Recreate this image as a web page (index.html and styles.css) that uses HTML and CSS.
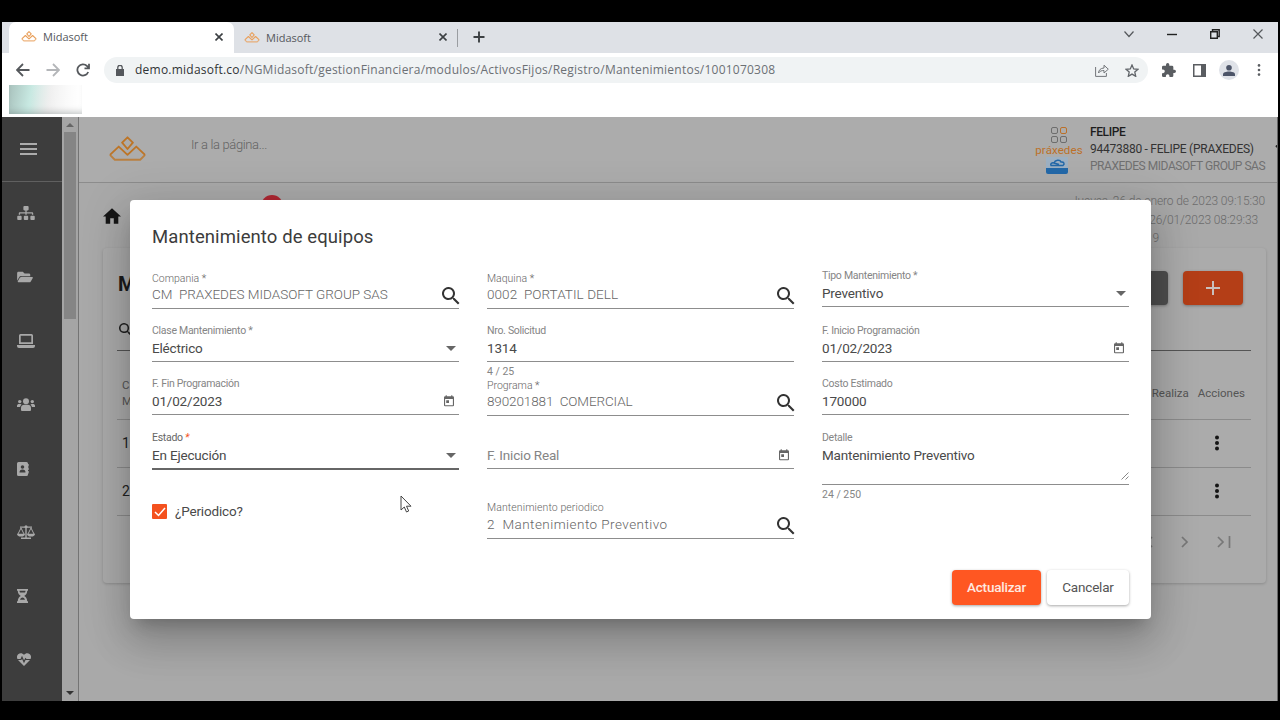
FILE: index.html
```
<!DOCTYPE html>
<html lang="es">
<head>
    <meta charset="utf-8">
    <title>Midasoft</title>
    <link rel="stylesheet" href="styles.css">
</head>
<body>
    <svg class="defs">
        <symbol id="logo" viewBox="0 0 40 26">
            <path d="M20 1l5.500 5.500L20 13l-5.500-6.500zM2 19l9-8.500 9 8.500 9-8.500L38 19" />
            <path class="logo-base" d="M2 19l5 5h26l5-5" />
        </symbol>
        <symbol id="search" viewBox="0 0 18 18">
            <path d="M12.500 11h-.79l-.28-.27A6.500 6.500 0 1 0 10.730 11.430l.27.28v.79l5 4.990L17.490 16zm-6 0a4.500 4.500 0 1 1 0-9 4.500 4.500 0 0 1 0 9z" />
        </symbol>
        <symbol id="calendar" viewBox="3 1 18 21">
            <path d="M19 3h-1V1h-2v2H8V1H6v2H5a2 2 0 0 0-2 2v14a2 2 0 0 0 2 2h14a2 2 0 0 0 2-2V5a2 2 0 0 0-2-2zm0 16H5V8h14zM7 10h5v5H7z" />
        </symbol>
    </svg>

    <div class="window">
        <div class="tabs">
            <div class="tab active">
                <svg class="favicon logo"><use href="#logo" /></svg>
                <span>Midasoft</span>
                <svg class="close" viewBox="0 0 8 8"><path d="M.5.5l7 7M7.500.5l-7 7" /></svg>
            </div>
            <div class="tab">
                <svg class="favicon logo"><use href="#logo" /></svg>
                <span>Midasoft</span>
                <svg class="close" viewBox="0 0 8 8"><path d="M.5.5l7 7M7.500.5l-7 7" /></svg>
            </div>
            <svg class="new-tab" viewBox="0 0 12 12"><path d="M6 .5v11M.5 6h11" /></svg>
            <div class="controls">
                <svg width="10" height="10" viewBox="0 0 10 10"><path d="M.5 2.500l4.500 5 4.500-5" /></svg>
                <svg width="10" height="10" viewBox="0 0 10 10"><path class="dark" d="M0 5.500h10" /></svg>
                <svg width="10" height="10" viewBox="0 0 10 10"><path class="dark" d="M.7 2.700h6.600v6.600H.7zM2.500 2.500V.8h6.700v6.700H7.500" /></svg>
                <svg width="10" height="10" viewBox="0 0 10 10"><path d="M.5.5l9 9M9.500.5l-9 9" /></svg>
            </div>
        </div>

        <div class="toolbar">
            <div class="nav">
                <svg viewBox="0 0 14 14"><path d="M13.500 7H1.500M7 1L1 7l6 6" /></svg>
                <svg class="disabled" viewBox="0 0 14 14"><path d="M.5 7h12M7 1l6 6-6 6" /></svg>
                <svg viewBox="0 0 14 14"><path d="M12.200 9A5.600 5.600 0 1 1 11 3L12.800 5M13 .8V5.300H8.500" /></svg>
            </div>
            <div class="address">
                <svg class="lock" viewBox="0 0 8 11"><path d="M0 4h8v7H0z" /><path class="shackle" d="M1.800 4V2.500a2.200 2.200 0 0 1 4.400 0V4" /></svg>
                <span class="url"><b>demo.midasoft.co</b>/NGMidasoft/gestionFinanciera/modulos/ActivosFijos/Registro/Mantenimientos/1001070308</span>
                <svg class="share" viewBox="0 0 14 13"><path d="M.6 3v9.400h10.800V9M3.500 9c.3-3 2-4.800 5.500-5V1.200l4.300 4L9 9V6.500C6.500 6.500 5 7 3.500 9z" /></svg>
                <svg class="star" viewBox="0 0 14 13"><path d="M7 1l1.700 3.900 4.300.4-3.200 2.800.9 4.200L7 10.100l-3.700 2.200.9-4.200L1 5.300l4.300-.4z" /></svg>
            </div>
            <div class="extensions">
                <svg class="puzzle" viewBox="2 1 21 21"><path d="M20.500 11H19V7a2 2 0 0 0-2-2h-4V3.500a2.500 2.500 0 0 0-5 0V5H4a2 2 0 0 0-2 2v3.800h1.500a2.700 2.700 0 0 1 0 5.400H2V20a2 2 0 0 0 2 2h3.800v-1.500a2.700 2.700 0 0 1 5.400 0V22H17a2 2 0 0 0 2-2v-4h1.500a2.500 2.500 0 0 0 0-5z" /></svg>
                <svg class="panel" viewBox="0 0 13 13"><path d="M0 0h13v13H0zM1.500 1.500v10H8v-10z" fill-rule="evenodd" /></svg>
                <div class="avatar"><svg viewBox="0 0 12 11"><circle cx="6" cy="2.800" r="2.800" /><path d="M0 11V9.500C0 7.500 3 6.600 6 6.600s6 .9 6 2.900V11z" /></svg></div>
                <svg class="more" viewBox="0 0 4 12"><circle cx="2" cy="1.400" r="1.300" /><circle cx="2" cy="6" r="1.300" /><circle cx="2" cy="10.600" r="1.300" /></svg>
            </div>
        </div>
        <div class="bookmarks"><div class="bookmark-blur"></div></div>

        <div class="app">
            <div class="sidebar">
                <div class="menu"><i></i><i></i><i></i></div>
                <div class="item"><svg width="18" height="14" viewBox="0 0 640 512"><path d="M128 352H32c-17.670 0-32 14.330-32 32v96c0 17.670 14.330 32 32 32h96c17.670 0 32-14.330 32-32v-96c0-17.670-14.330-32-32-32zm-24-80h192v48h48v-48h192v48h48v-57.590c0-21.170-17.230-38.410-38.410-38.410H344v-64h40c17.670 0 32-14.330 32-32V32c0-17.670-14.330-32-32-32H256c-17.670 0-32 14.330-32 32v96c0 17.670 14.330 32 32 32h40v64H94.410C73.230 224 56 241.230 56 262.410V320h48v-48zm264 80h-96c-17.670 0-32 14.330-32 32v96c0 17.670 14.330 32 32 32h96c17.670 0 32-14.330 32-32v-96c0-17.670-14.330-32-32-32zm240 0h-96c-17.670 0-32 14.330-32 32v96c0 17.670 14.330 32 32 32h96c17.670 0 32-14.330 32-32v-96c0-17.670-14.330-32-32-32z" /></svg></div>
                <div class="item"><svg width="16" height="14" viewBox="0 0 576 512"><path d="M572.700 292L500.300 416a64 64 0 0 1-55.300 32H45c-18.500 0-30-20-20.700-36l72.400-124.200A64 64 0 0 1 152 256h400c18.500 0 30 20 20.700 36zM152 224h328v-48c0-26.500-21.500-48-48-48H272l-64-64H48C21.500 64 0 85.500 0 112v278l69-118.400A96 96 0 0 1 152 224z" /></svg></div>
                <div class="item"><svg width="18" height="14" viewBox="0 0 18 14"><path d="M3.500 0h11A1.500 1.500 0 0 1 16 1.500V10H2V1.500A1.500 1.500 0 0 1 3.500 0zm.2 1.700v6.600h10.600V1.700zM0 11h18v1a2 2 0 0 1-2 2H2a2 2 0 0 1-2-2z" fill-rule="evenodd" /></svg></div>
                <div class="item"><svg width="18" height="13" viewBox="0 0 18 13"><circle cx="9" cy="3.200" r="3" /><circle cx="2.700" cy="3.600" r="1.700" /><circle cx="15.300" cy="3.600" r="1.700" /><path d="M4 12V10c0-2 1.500-3.200 3.300-3.200h3.400C12.500 6.800 14 8 14 10v2a1 1 0 0 1-1 1H5a1 1 0 0 1-1-1zM0 9V7.700C0 6.600 1 6 2 6h1.500l1 .5A5 5 0 0 0 3 9zM18 9V7.700c0-1.100-1-1.700-2-1.700h-1.500l-1 .5A5 5 0 0 1 15 9z" /></svg></div>
                <div class="item"><svg width="12" height="14" viewBox="0 0 12 14"><path d="M1.500 0h8A1.500 1.500 0 0 1 11 1.500v11A1.500 1.500 0 0 1 9.500 14h-8A1.500 1.500 0 0 1 0 12.500v-11A1.500 1.500 0 0 1 1.500 0zM5.500 3.200a1.800 1.800 0 1 0 0 3.600 1.800 1.800 0 0 0 0-3.600zM2.500 10.500h6c0-1.800-1-3-3-3s-3 1.200-3 3zM11.300 2h.7v2.500h-.7zM11.300 5.500h.7V8h-.7zM11.300 9h.7v2.500h-.7z" fill-rule="evenodd" /></svg></div>
                <div class="item"><svg width="18" height="14" viewBox="0 0 18 14"><path d="M8.300 1h1.400v11.500H14V14H4v-1.500h4.300zM3 1.500h12v1.300H3z" /><circle cx="9" cy="1.700" r="1.500" /><path class="line" d="M1 9l3-6 3 6M11 9l3-6 3 6" /><path d="M0 8.800h8a4 2.800 0 0 1-8 0zM10 8.800h8a4 2.800 0 0 1-8 0z" /></svg></div>
                <div class="item"><svg width="11" height="14" viewBox="0 0 11 14"><path d="M0 0h11v1.800h-.8C10.200 4.500 9 6 7.200 7c1.800 1 3 2.500 3 5.200h.8V14H0v-1.800h.8c0-2.700 1.200-4.200 3-5.200C2 6 .8 4.500.8 1.800H0zM3 3.500h5c.3-.5.500-1 .5-1.700h-6c0 .7.200 1.200.5 1.700zM3 10.800h5C7.400 9.200 6.500 8.500 5.500 8.500S3.600 9.200 3 10.800z" fill-rule="evenodd" /></svg></div>
                <div class="item"><svg width="14" height="13" viewBox="0 0 14 13"><path d="M7 13L1 7C-.5 5-.3 2.500 1.200 1.200 3-.4 5.500 0 7 1.800 8.500 0 11-.4 12.800 1.200c1.500 1.300 1.700 3.800.2 5.800z" /><path class="pulse" d="M0 6.500h4L5 4.200l2 4.600 1.500-3 .6.700H14" /></svg></div>
            </div>
            <div class="scrollbar">
                <i class="up"></i>
                <div class="thumb"></div>
                <i class="down"></i>
            </div>

            <div class="main">
                <div class="header">
                    <svg class="brand logo"><use href="#logo" /></svg>
                    <span class="goto">Ir a la página...</span>
                    <div class="company">
                        <div class="squares"><i></i><i class="o"></i><i></i><i></i></div>
                        <span>práxedes</span>
                        <svg viewBox="0 0 22 17"><path class="card-top" d="M0 0h22v15H0z" /><path class="card-bottom" d="M0 11h22v4a2 2 0 0 1-2 2H2a2 2 0 0 1-2-2z" /><path class="cloud" d="M5 8.500c-1-2 1-3 3-2.500 1-3 6-4 7-1 3-.5 4 2 2 3.500zM8 6l5 1.500" /></svg>
                    </div>
                    <div class="user">
                        <div class="user-name">FELIPE</div>
                        <div class="user-id">94473880 - FELIPE (PRAXEDES)</div>
                        <div class="user-company">PRAXEDES MIDASOFT GROUP SAS</div>
                    </div>
                    <svg class="user-arrow" viewBox="0 0 8 5"><path d="M1 .5l3.500 3.500L8 .5" /></svg>
                </div>

                <div class="crumbs">
                    <svg class="home" viewBox="2 3 20 17"><path d="M10 20v-6h4v6h5v-8h3L12 3 2 12h3v8z" /></svg>
                    <div class="notice"></div>
                    <div class="dates">
                        <div>Jueves, 26 de enero de 2023 09:15:30</div>
                        <div class="access">26/01/2023 08:29:33</div>
                        <div class="version">9</div>
                    </div>
                </div>

                <div class="card">
                    <div class="card-head">
                        <h2>M</h2>
                        <div class="btn-gray"></div>
                        <div class="btn-add"><svg viewBox="0 0 14 14"><path d="M7 0v14M0 7h14" /></svg></div>
                    </div>
                    <div class="filter"><svg><use href="#search" /></svg></div>
                    <div class="row head"><div>C<br>M</div><div class="right"><span>Realiza</span><span>Acciones</span></div></div>
                    <div class="row"><div>1</div><svg class="dots" viewBox="0 0 4 16"><circle cx="2" cy="2.500" r="2" /><circle cx="2" cy="8" r="2" /><circle cx="2" cy="13.500" r="2" /></svg></div>
                    <div class="row"><div>2</div><svg class="dots" viewBox="0 0 4 16"><circle cx="2" cy="2.500" r="2" /><circle cx="2" cy="8" r="2" /><circle cx="2" cy="13.500" r="2" /></svg></div>
                    <div class="pager">
                        <svg width="8" height="12" viewBox="0 0 8 12"><path d="M7 1L2 6l5 5" /></svg>
                        <svg width="8" height="12" viewBox="0 0 8 12"><path d="M1 1l5 5-5 5" /></svg>
                        <svg width="14" height="12" viewBox="0 0 14 12"><path d="M1 1l5 5-5 5M12.500 0v12" /></svg>
                    </div>
                </div>
            </div>
        </div>
    </div>

    <div class="dialog">
        <h1>Mantenimiento de equipos</h1>
        <div class="form">
            <div class="field lookup">
                <label>Compania *</label>
                <div class="value"><span class="company-name">CM&nbsp; PRAXEDES MIDASOFT GROUP SAS</span><svg class="search"><use href="#search" /></svg></div>
            </div>
            <div class="field lookup">
                <label>Maquina *</label>
                <div class="value"><span>0002&nbsp; PORTATIL DELL</span><svg class="search"><use href="#search" /></svg></div>
            </div>
            <div class="field">
                <label>Tipo Mantenimiento *</label>
                <div class="value">Preventivo<i class="caret"></i></div>
            </div>

            <div class="field">
                <label>Clase Mantenimiento *</label>
                <div class="value">Eléctrico<i class="caret"></i></div>
            </div>
            <div class="field">
                <label>Nro. Solicitud</label>
                <div class="value">1314</div>
                <div class="hint">4 / 25</div>
            </div>
            <div class="field">
                <label>F. Inicio Programación</label>
                <div class="value">01/02/2023<svg class="calendar"><use href="#calendar" /></svg></div>
            </div>

            <div class="field">
                <label>F. Fin Programación</label>
                <div class="value">01/02/2023<svg class="calendar"><use href="#calendar" /></svg></div>
            </div>
            <div class="field lookup program">
                <label>Programa *</label>
                <div class="value"><span>890201881&nbsp; COMERCIAL</span><svg class="search"><use href="#search" /></svg></div>
            </div>
            <div class="field">
                <label>Costo Estimado</label>
                <div class="value">170000</div>
            </div>

            <div class="field focused">
                <label>Estado <em>*</em></label>
                <div class="value">En Ejecución<i class="caret"></i></div>
            </div>
            <div class="field">
                <label></label>
                <div class="value placeholder">F. Inicio Real<svg class="calendar"><use href="#calendar" /></svg></div>
            </div>
            <div class="field area">
                <label>Detalle</label>
                <div class="value">Mantenimiento Preventivo<svg class="resize" viewBox="0 0 8 8"><path d="M.5 7.500l7-7M4.500 7.500l3-3" /></svg></div>
                <div class="hint">24 / 250</div>
            </div>

            <div class="check">
                <div class="box"><svg viewBox="0 0 12 10"><path d="M1 5l3.500 3.500L11 1" /></svg></div>
                <span>¿Periodico?</span>
            </div>
            <div class="field lookup periodic">
                <label>Mantenimiento periodico</label>
                <div class="value"><span>2&nbsp; Mantenimiento Preventivo</span><svg class="search"><use href="#search" /></svg></div>
            </div>
        </div>
        <div class="actions">
            <button class="primary">Actualizar</button>
            <button>Cancelar</button>
        </div>
    </div>

    <svg class="cursor" viewBox="0 0 12 18"><path d="M1 1v14l3.300-3 2.200 5 2.200-1-2.200-4.800H11z" /></svg>
</body>
</html>
```
FILE: styles.css
```
* {
    box-sizing: border-box;
}

body {
    margin: 0;
    height: 720px;
    overflow: hidden;
    background: #000;
    font-family: Roboto, sans-serif;
    padding: 22px 2px 19px;
}

svg {
    display: block;
    flex: none;
}

.defs {
    position: absolute;
    width: 0;
    height: 0;
}

.window {
    width: 1276px;
    height: 679px;
    background: #fff;
    overflow: hidden;
}

.logo {
    fill: none;
    stroke: #e9a05c;
    stroke-width: 2.8;
    stroke-linejoin: round;
}

/* Browser */
.tabs {
    display: flex;
    align-items: center;
    height: 31px;
    background: #dee1e6;
    font-family: "Open Sans", sans-serif;
    font-size: 11px;
    color: #55585c;
}

.tab {
    display: flex;
    align-items: center;
    width: 224px;
    height: 31px;
    padding: 0 11px 2px 12px;
}

.tab.active {
    background: #fff;
    width: 225px;
    margin-left: 7px;
    border-radius: 7px 7px 0 0;
}

.tab:nth-child(2) {
    border-right: 1px solid #9a9da1;
    height: 18px;
    padding: 0 10px 1px 10px;
    margin-right: 15px;
    width: 224px;
}

.favicon {
    width: 16px;
    height: 11px;
    margin-right: 6px;
}

.tab .close {
    width: 8px;
    height: 8px;
    margin-left: auto;
    stroke: #3c4043;
    stroke-width: 1.6;
}

.new-tab {
    width: 12px;
    height: 12px;
    margin-top: -1px;
    stroke: #3c4043;
    stroke-width: 1.9;
}

.controls {
    display: flex;
    gap: 33px;
    margin: -7px 15px 0 auto;
    fill: none;
    stroke: #55585c;
    stroke-width: 1.2;
}

.controls .dark {
    stroke: #222;
    stroke-width: 1.4;
}

.toolbar {
    display: flex;
    align-items: center;
    height: 30px;
    margin-top: 2px;
}

.nav {
    display: flex;
    gap: 16px;
    width: 102px;
    padding-left: 14px;
    fill: none;
    stroke: #55585c;
    stroke-width: 1.8;
}

.nav svg {
    width: 14px;
    height: 14px;
}

.nav .disabled {
    stroke: #b4b6b9;
}

.address {
    display: flex;
    align-items: center;
    width: 1044px;
    height: 26px;
    border-radius: 13px;
    background: #f0f3f4;
    padding: 0 9px 0 12px;
}

.lock {
    width: 8px;
    height: 11px;
    fill: #55585c;
    margin-right: 11px;
}

.shackle {
    fill: none;
    stroke: #55585c;
    stroke-width: 1.3;
}

.url {
    font-family: "Open Sans", sans-serif;
    font-size: 12px;
    color: #6c7074;
    letter-spacing: 0.230px;
    padding-bottom: 1px;
}

.url b {
    font-weight: 400;
    color: #303336;
}

.share {
    width: 14px;
    height: 13px;
    margin-left: auto;
    margin-right: 16px;
    fill: none;
    stroke: #73767a;
}

.star {
    width: 14px;
    height: 13px;
    fill: none;
    stroke: #5f6368;
    stroke-width: 1.3;
}

.extensions {
    display: flex;
    align-items: center;
    margin-left: 14px;
    fill: #5a5d61;
}

.puzzle {
    width: 14px;
    height: 14px;
}

.panel {
    width: 13px;
    height: 13px;
    margin: 0 13px 0 17px;
}

.avatar {
    display: flex;
    align-items: center;
    justify-content: center;
    width: 20px;
    height: 20px;
    border-radius: 50%;
    background: #dfe2e8;
    fill: #4c5468;
}

.avatar svg {
    width: 12px;
    height: 11px;
}

.more {
    width: 4px;
    height: 12px;
    margin-left: 18px;
}

.bookmarks {
    height: 32px;
    padding-left: 7px;
}

.bookmark-blur {
    width: 73px;
    height: 29px;
    background: linear-gradient(to left, #fff, rgba(255, 255, 255, 0) 70%), linear-gradient(100deg, #a9c2bd, #c8e9e2 30%, #e6e6e6 55%, #f6f6f6);
    box-shadow: inset 0 -6px 6px -4px rgba(90, 100, 100, 0.35);
}

/* Application behind the dialog */
.app {
    display: flex;
    height: 584px;
    background: #a9a9a9;
}

.sidebar {
    width: 60px;
    background: #3d3d3d;
    fill: #a8a8a8;
}

.menu {
    display: flex;
    flex-direction: column;
    justify-content: center;
    gap: 3px;
    height: 65px;
    padding-left: 18px;
    border-bottom: 1px solid #606060;
}

.menu i {
    width: 17px;
    height: 2px;
    background: #acacac;
}

.item {
    display: flex;
    align-items: center;
    height: 63.800px;
    padding: 0 0 1px 15px;
}

.item .line {
    fill: none;
    stroke: #a8a8a8;
}

.pulse {
    fill: none;
    stroke: #3d3d3d;
    stroke-width: 1.2;
}

.scrollbar {
    display: flex;
    flex-direction: column;
    align-items: center;
    width: 17px;
    background: #a5a5a5;
    border-right: 1px solid #747474;
    padding: 6px 0 6px;
}

.scrollbar .up,
.scrollbar .down,
.caret {
    border-left: 4px solid transparent;
    border-right: 4px solid transparent;
}

.scrollbar .up {
    border-bottom: 4px solid #666;
}

.scrollbar .down {
    border-top: 4px solid #333;
    margin-top: auto;
}

.thumb {
    width: 12px;
    height: 187px;
    margin-top: 5px;
    background: #858585;
}

.main {
    flex: 1;
    min-width: 0;
    border-right: 1px solid #666;
}

.header {
    display: flex;
    height: 66px;
    background: #acacac;
    border-bottom: 1px solid #8c8c8c;
    overflow: hidden;
}

.brand {
    width: 39px;
    height: 26px;
    margin: 19px 0 0 29px;
    stroke: #bd7527;
    stroke-width: 1.9;
}

.brand .logo-base,
.logo-base {
    stroke-opacity: 0.8;
}

.brand + .goto {
    font-size: 13px;
    font-weight: 300;
    color: #636363;
    margin: 20px 0 0 44px;
    letter-spacing: -0.350px;
}

.company {
    display: flex;
    flex-direction: column;
    align-items: center;
    width: 50px;
    margin: 10px 6px 0 auto;
    color: #bc7028;
    font-size: 11.500px;
    line-height: 12px;
    letter-spacing: 0.100px;
}

.squares {
    display: grid;
    grid-template-columns: 7px 7px;
    gap: 2px;
    margin-bottom: 1px;
}

.squares i {
    width: 7px;
    height: 7px;
    border: 1.500px solid #6d6d6d;
    border-radius: 2px;
}

.squares .o {
    border-color: #bc7028;
}

.company svg {
    width: 22px;
    height: 17px;
    margin: 1px 5px 0 0;
}

.card-top {
    fill: #9db0c2;
}

.card-bottom {
    fill: #2368a8;
}

.cloud {
    fill: none;
    stroke: #2368a8;
    stroke-width: 1.500;
}

.user {
    width: 176px;
    padding-top: 7px;
    font-size: 12px;
    line-height: 17px;
    white-space: nowrap;
}

.user-name {
    font-weight: 500;
    color: #1d1d1d;
    letter-spacing: -0.400px;
}

.user-id {
    color: #333;
    letter-spacing: -0.260px;
}

.user-company {
    color: #707070;
    letter-spacing: -0.460px;
}

.user-arrow {
    width: 8px;
    height: 5px;
    margin: 28px -6px 0 9px;
    fill: none;
    stroke: #222;
    stroke-width: 2;
}

.crumbs {
    display: flex;
    height: 65px;
    padding: 0 12px 0 24px;
}

.home {
    width: 18px;
    height: 16px;
    margin-top: 25px;
    fill: #161616;
}

.notice {
    width: 22px;
    height: 22px;
    margin: 12px 0 0 140px;
    border-radius: 50%;
    background: #ae2732;
}

.dates {
    margin-left: auto;
    padding-top: 9px;
    font-size: 12px;
    line-height: 18.700px;
    font-weight: 300;
    color: #6c6c6c;
    text-align: right;
    letter-spacing: -0.100px;
}

.access {
    padding-right: 7px;
}

.version {
    padding-right: 106px;
}

.card {
    width: 1163px;
    height: 335px;
    margin-left: 24px;
    padding: 0 15px 0 14px;
    border-radius: 4px;
    background: #ababab;
    box-shadow: 0 1px 3px rgba(0, 0, 0, 0.18);
}

.card-head {
    display: flex;
    padding-top: 23px;
    height: 75px;
}

.card-head h2 {
    margin: 1px auto 0 1px;
    width: 12px;
    font-size: 20px;
    color: #1b1b1b;
}

.btn-gray,
.btn-add {
    width: 60px;
    height: 34px;
    border-radius: 4px;
    background: #4e4e4e;
    box-shadow: 0 1px 3px rgba(0, 0, 0, 0.3);
}

.btn-add {
    display: flex;
    align-items: center;
    justify-content: center;
    background: #b43e17;
    margin: 0 8px 0 15px;
}

.btn-add svg {
    width: 14px;
    height: 14px;
    stroke: #c9c0bd;
    stroke-width: 2;
}

.filter {
    height: 28px;
    border-bottom: 1px solid #555;
}

.filter svg {
    width: 14px;
    height: 14px;
    margin-left: 2px;
    fill: #222;
}

.row {
    display: flex;
    align-items: center;
    justify-content: space-between;
    height: 48px;
    padding: 0 32px 1px 5px;
    border-bottom: 1px solid #8b8b8b;
    font-size: 14px;
    color: #222;
}

.row.head {
    height: 69px;
    padding: 15px 6px 0 5px;
    font-size: 11.500px;
    line-height: 16px;
    color: #555;
}

.row .right {
    display: flex;
    gap: 9px;
}

.dots {
    width: 4px;
    height: 16px;
    fill: #151515;
}

.pager {
    display: flex;
    justify-content: flex-end;
    gap: 28px;
    padding: 20px 20px 0 0;
    fill: none;
    stroke: #777;
    stroke-width: 1.700;
}

/* Dialog */
.dialog {
    position: absolute;
    left: 130px;
    top: 200px;
    width: 1021px;
    height: 419px;
    padding: 26px 22px 0;
    border-radius: 4px;
    background: #fff;
    box-shadow: 0 11px 15px -7px rgba(0, 0, 0, 0.2), 0 24px 38px 3px rgba(0, 0, 0, 0.14), 0 9px 46px 8px rgba(0, 0, 0, 0.12);
    color: #4a4a4a;
}

.dialog h1 {
    margin: 0;
    height: 42px;
    font-size: 18.500px;
    line-height: 23px;
    font-weight: 400;
    letter-spacing: 0.100px;
    color: #3c3c3c;
}

.form {
    display: grid;
    grid-template-columns: repeat(3, 307px);
    grid-template-rows: 55px 53px 54px 68px 70px;
    column-gap: 28px;
}

.field label {
    display: block;
    height: 14px;
    font-size: 10.500px;
    line-height: 15px;
    letter-spacing: -0.280px;
    color: #858585;
}

.field em {
    color: #f4511e;
}

.value {
    display: flex;
    align-items: center;
    justify-content: space-between;
    height: 25px;
    padding-bottom: 2px;
    border-bottom: 1px solid #8d8d8d;
    font-size: 13.500px;
    letter-spacing: -0.180px;
    white-space: nowrap;
}

.lookup {
    padding-top: 3px;
}

.lookup label,
.lookup .value {
    font-weight: 300;
    letter-spacing: 0;
    color: #666;
}

.lookup .value {
    height: 24px;
    padding-bottom: 2px;
}

.lookup .value span {
    padding-bottom: 3px;
    letter-spacing: 0.060px;
}

.lookup .value .company-name {
    letter-spacing: -0.020px;
}

.program {
    padding-top: 2px;
}

.program .value span {
    letter-spacing: -0.120px;
}

.periodic .value span {
    letter-spacing: 0.450px;
}

.periodic label {
    letter-spacing: 0.100px;
    line-height: 13px;
}

.placeholder {
    color: #858585;
}

.focused .value {
    height: 26px;
    padding-bottom: 2px;
    border-bottom: 2px solid #666;
}

.focused label {
    color: #666;
}

.area .value {
    height: 41px;
    align-items: flex-start;
    padding-top: 3px;
}

.resize {
    width: 8px;
    height: 8px;
    margin-top: 25px;
    stroke: #888;
}

.hint {
    font-size: 10.500px;
    line-height: 12px;
    margin-top: 4px;
    color: #858585;
}

.search {
    width: 18px;
    height: 18px;
    margin-right: -1px;
    fill: #333;
}

.calendar {
    width: 10px;
    height: 12px;
    margin-right: 5px;
    fill: #666;
}

.caret {
    border-left-width: 5px;
    border-right-width: 5px;
    border-top: 5px solid #666;
    margin: 1px 3px 0 0;
}

.check {
    display: flex;
    height: 15px;
    margin-top: 6px;
    align-items: center;
    gap: 7px;
    font-size: 13.500px;
    letter-spacing: -0.180px;
}

.check span {
    padding: 0 0 1px 1px;
}

.box {
    display: flex;
    align-items: center;
    justify-content: center;
    width: 15px;
    height: 15px;
    border-radius: 1px;
    background: #f4511e;
}

.box svg {
    width: 12px;
    height: 10px;
    fill: none;
    stroke: #fff;
    stroke-width: 1.500;
}

.actions {
    display: flex;
    justify-content: flex-end;
    gap: 6px;
    margin-top: 2px;
}

.actions button {
    width: 82px;
    height: 35px;
    padding: 0 0 2px;
    border: 0;
    border-radius: 4px;
    background: #fff;
    color: #555;
    font-family: Roboto, sans-serif;
    font-size: 13.500px;
    letter-spacing: -0.200px;
    box-shadow: 0 1px 3px rgba(0, 0, 0, 0.35);
}

.actions .primary {
    width: 89px;
    background: #ff5722;
    color: #ffe9e0;
    font-weight: 500;
}

.cursor {
    position: absolute;
    left: 400px;
    top: 495px;
    width: 12px;
    height: 18px;
    fill: #fff;
    stroke: #444;
}
```
